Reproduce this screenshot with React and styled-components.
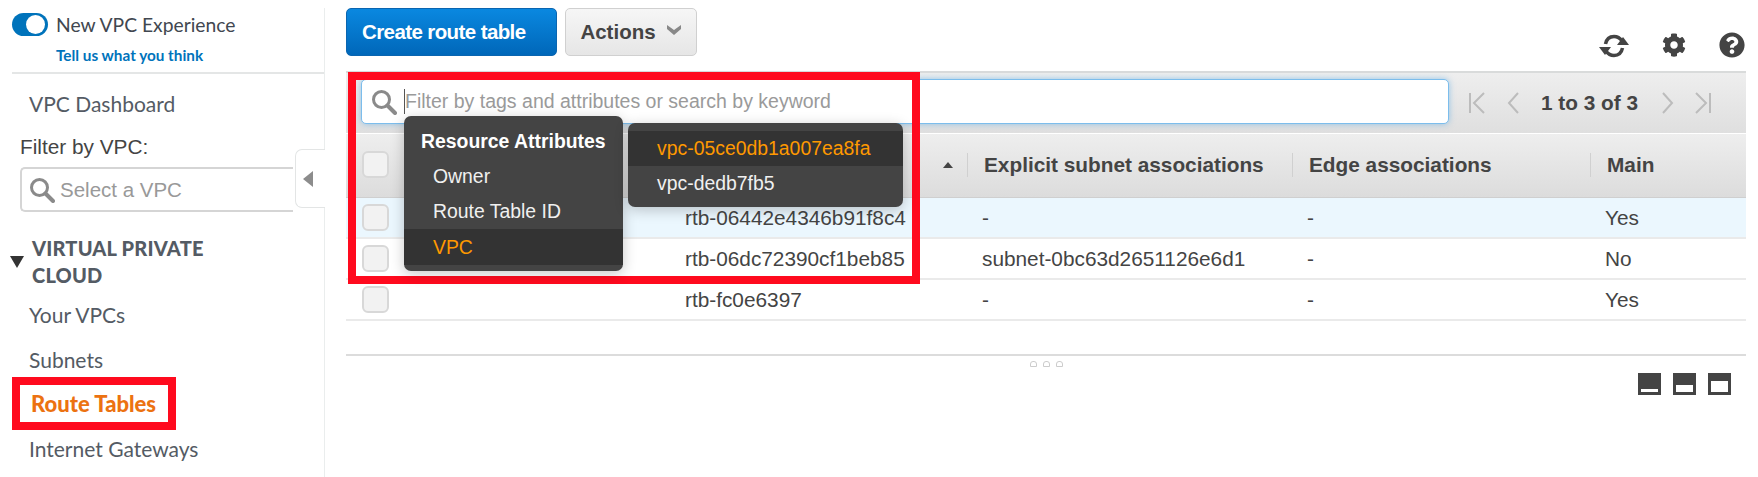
import styled, { createGlobalStyle } from "styled-components";
import { FaCog, FaQuestionCircle } from "react-icons/fa";

const GlobalStyle = createGlobalStyle`
  html, body {
    margin: 0;
    padding: 0;
    background: #fff;
  }
  * {
    box-sizing: border-box;
  }
`;

const UI_FONT = `"Lato", "Open Sans", sans-serif`;
const TABLE_FONT = `"Liberation Sans", Arial, sans-serif`;

const Page = styled.div`
  position: relative;
  display: flex;
  width: 1758px;
  height: 477px;
  overflow: hidden;
  font-family: ${TABLE_FONT};
  color: #444;
`;

/* sidebar */
const Sidebar = styled.aside`
  position: relative;
  flex: 0 0 325px;
  margin-top: 8px;
  padding-left: 12px;
  border-right: 1px solid #eaeded;
`;

const Experience = styled.div`
  display: grid;
  grid-template-columns: 36px 1fr;
  column-gap: 8px;
  height: 66px;
  padding-top: 5px;
  border-bottom: 2px solid #e4e6e6;
`;

const Toggle = styled.span`
  position: relative;
  width: 36px;
  height: 23px;
  border-radius: 12px;
  background: #0073bb;
  &::after {
    content: "";
    position: absolute;
    right: 3px;
    top: 2px;
    width: 19px;
    height: 19px;
    border-radius: 50%;
    background: #fff;
  }
`;

const ExperienceTitle = styled.div`
  font-family: ${UI_FONT};
  font-size: 19.3px;
  line-height: 24px;
  color: #414750;
`;

const Feedback = styled.a`
  grid-column: 2;
  margin-top: 1px;
  font-family: ${UI_FONT};
  font-size: 15.3px;
  font-weight: 700;
  line-height: 24px;
  color: #0073bb;
`;

const NavLink = styled.div`
  padding-left: ${(p) => p.$indent || 17}px;
  height: ${(p) => p.$height || 44.5}px;
  line-height: ${(p) => p.$height || 44.5}px;
  font-family: ${UI_FONT};
  font-size: ${(p) => (p.$active ? 22 : 21)}px;
  font-weight: ${(p) => (p.$active ? 900 : 400)};
  color: ${(p) => (p.$active ? "#ec7211" : "#545b64")};
`;

const FilterLabel = styled.div`
  margin: 1px 0 0 8px;
  font-size: 20.8px;
  line-height: 24px;
  color: #444;
`;

const VpcSelect = styled.div`
  display: flex;
  align-items: center;
  gap: 5px;
  width: 273px;
  height: 45px;
  margin: 8px 0 0 8px;
  padding-left: 7px;
  border: 2px solid #d5d5d5;
  border-right: 0;
  border-radius: 5px 0 0 5px;
  font-size: 20.5px;
  color: #999;
`;

const CollapseTab = styled.div`
  position: absolute;
  left: 295px;
  top: 141px;
  display: flex;
  align-items: center;
  justify-content: center;
  width: 30px;
  height: 59px;
  padding-right: 5px;
  background: #fff;
  border: 1px solid #e3e5e5;
  border-right: 0;
  border-radius: 7px 0 0 7px;
  &::before {
    content: "";
    border-style: solid;
    border-width: 8px 10px 8px 0;
    border-color: transparent #8c8c8c transparent transparent;
  }
`;

const Section = styled.div`
  display: flex;
  gap: 8px;
  margin-top: 23px;
  font-family: ${UI_FONT};
  font-size: 20px;
  font-weight: 900;
  line-height: 27px;
  letter-spacing: 0.2px;
  color: #545b64;
  &::before {
    content: "";
    flex: none;
    width: 0;
    height: 0;
    margin: 21px 0 0 -2px;
    border-style: solid;
    border-width: 12px 7px 0 7px;
    border-color: #333 transparent transparent transparent;
  }
`;

const SectionLinks = styled.div`
  margin-top: 4px;
`;

/* main column */
const Main = styled.main`
  flex: 1;
  padding: 8px 12px 0 21px;
`;

const Actions = styled.div`
  display: flex;
  gap: 8px;
  height: 63px;
`;

const PrimaryButton = styled.button`
  width: 211px;
  height: 48px;
  padding: 0 0 0 15px;
  border: 1px solid #0a65b0;
  border-radius: 5px;
  background: linear-gradient(#0a88e0, #0067b9);
  font-family: ${TABLE_FONT};
  font-size: 20.5px;
  font-weight: 700;
  letter-spacing: -0.6px;
  text-align: left;
  color: #fff;
`;

const SecondaryButton = styled.button`
  display: flex;
  align-items: center;
  justify-content: center;
  gap: 10px;
  width: 132px;
  height: 48px;
  padding: 0;
  border: 1px solid #d0d0d0;
  border-radius: 5px;
  background: linear-gradient(#f6f6f6, #e6e6e6);
  font-family: ${TABLE_FONT};
  font-size: 20.5px;
  font-weight: 700;
  color: #444;
  svg {
    margin-top: -4px;
  }
`;

const ToolIcons = styled.div`
  display: flex;
  align-items: center;
  gap: 33px;
  margin: 14px 1px 0 auto;
  height: 48px;
  color: #444;
`;

const FilterBar = styled.div`
  display: flex;
  align-items: center;
  height: 62px;
  padding-left: 15px;
  border-top: 2px solid #d9dbdb;
  background: linear-gradient(#eeeeee, #dfdfdf);
`;

const SearchBox = styled.div`
  display: flex;
  align-items: center;
  gap: 8px;
  width: 1088px;
  height: 45px;
  margin-bottom: 3px;
  padding-left: 9px;
  background: #fff;
  border: 1px solid #7cbdec;
  border-radius: 5px;
  box-shadow: 0 0 6px rgba(90, 170, 230, 0.6);
  font-size: 19.5px;
  color: #9a9a9a;
`;

const Caret = styled.span`
  width: 1px;
  height: 25px;
  margin: 0 -8px 0 -1px;
  background: #555;
`;

const Pager = styled.div`
  display: flex;
  align-items: center;
  margin-left: 20px;
  font-size: 20.8px;
  font-weight: 700;
  color: #444;
`;

const PagerLabel = styled.span`
  margin: 0 24px 0 22px;
  white-space: nowrap;
`;

const PagerIcon = styled.svg`
  width: ${(p) => p.$w}px;
  height: 24px;
  margin-right: ${(p) => p.$gap || 0}px;
  fill: none;
  stroke: #bcbcbc;
  stroke-width: 2;
`;

const COLUMNS = "339px 282px 325px 298px 1fr";

const HeaderRow = styled.div`
  display: grid;
  grid-template-columns: ${COLUMNS};
  align-items: center;
  height: 64px;
  margin-top: 1px;
  padding-bottom: 2px;
  background: linear-gradient(#eeeeee, #dcdcdc);
  border-bottom: 1px solid #cfcfcf;
  font-size: 20.8px;
  font-weight: 700;
  color: #444;
`;

const HeaderCell = styled.div`
  display: flex;
  align-items: center;
  height: 24px;
  padding-left: 16px;
  border-left: 1px solid #d0d0d0;
`;

const SortCell = styled.div`
  display: flex;
  justify-content: flex-end;
  padding-right: 14px;
  &::after {
    content: "";
    border-style: solid;
    border-width: 0 5px 6px 5px;
    border-color: transparent transparent #444 transparent;
  }
`;

const Row = styled.div`
  display: grid;
  grid-template-columns: ${COLUMNS};
  align-items: center;
  height: 41px;
  background: ${(p) => (p.$selected ? "#ebf7fe" : "#fff")};
  border-bottom: 2px solid #eaeaea;
  font-size: 20.8px;
  color: #444;
`;

const Cell = styled.div`
  padding-left: ${(p) => p.$pad ?? 15}px;
  white-space: nowrap;
`;

const CheckCell = styled.div`
  padding-left: 16px;
  display: flex;
`;

const Checkbox = styled.span`
  width: 27px;
  height: 27px;
  border: 2px solid #d8d8d8;
  border-radius: 6px;
  background: #f2f2f2;
`;

const Splitter = styled.div`
  display: flex;
  justify-content: center;
  gap: 6px;
  height: 18px;
  margin-top: 33px;
  padding-top: 5px;
  border-top: 2px solid #dcdcdc;
`;

const Grip = styled.span`
  width: 7px;
  height: 6px;
  border: 1px solid #ccc;
  border-radius: 3px 3px 0 0;
`;

const PaneSizes = styled.div`
  display: flex;
  justify-content: flex-end;
  gap: 12px;
  margin-top: 1px;
  padding-right: 15px;
`;

const PaneSize = styled.span`
  display: flex;
  align-items: flex-end;
  width: 23px;
  height: 22px;
  padding: 0 3px 3px;
  background: #444;
  &::after {
    content: "";
    width: 100%;
    height: ${(p) => p.$fill}px;
    background: #fff;
  }
`;

/* overlays */
const Highlight = styled.div`
  position: absolute;
  left: ${(p) => p.$x}px;
  top: ${(p) => p.$y}px;
  width: ${(p) => p.$w}px;
  height: ${(p) => p.$h}px;
  border: 8px solid #ff0a1e;
  pointer-events: none;
`;

const Menu = styled.div`
  position: absolute;
  left: ${(p) => p.$x}px;
  top: ${(p) => p.$y}px;
  width: ${(p) => p.$w}px;
  height: ${(p) => p.$h}px;
  padding-top: ${(p) => p.$pad}px;
  background: #444;
  border-radius: 7px;
  box-shadow: 0 3px 14px rgba(0, 0, 0, 0.22);
  font-size: 19.4px;
  color: #f0f0f0;
`;

const MenuHeading = styled.div`
  height: 35px;
  padding-left: 17px;
  line-height: 35px;
  font-weight: 700;
  color: #fff;
`;

const MenuItem = styled.div`
  height: ${(p) => p.$height || 35}px;
  padding-left: ${(p) => p.$pad}px;
  line-height: ${(p) => p.$height || 35}px;
  background: ${(p) => (p.$active ? "#333" : "transparent")};
  color: ${(p) => (p.$active ? "#f90" : "#f0f0f0")};
`;

const SearchGlyph = ({ size = 26 }) => (
  <svg width={size} height={size} viewBox="0 0 26 26" fill="none" style={{ flex: "none" }}>
    <circle cx="10.5" cy="10.5" r="8" stroke="#8a8a8a" strokeWidth="3" />
    <path d="M16.5 16.5L24 24" stroke="#8a8a8a" strokeWidth="4" strokeLinecap="round" />
  </svg>
);

const RefreshGlyph = () => (
  <svg width="30" height="28" viewBox="0 0 30 28" fill="none">
    <path d="M6.5 12C7.5 7 11 4.5 15 4.5c3.5 0 6 1.5 8 4.5" stroke="#444" strokeWidth="3.5" />
    <path d="M23.5 16c-1 5-4.5 7.5-8.5 7.5-3.5 0-6-1.5-8-4.5" stroke="#444" strokeWidth="3.5" />
    <path d="M18 13h12l-6-8zM0 15h12l-6 8z" fill="#444" />
  </svg>
);

const rows = [
  { id: "rtb-06442e4346b91f8c4", subnet: "-", main: "Yes", selected: true },
  { id: "rtb-06dc72390cf1beb85", subnet: "subnet-0bc63d2651126e6d1", main: "No" },
  { id: "rtb-fc0e6397", subnet: "-", main: "Yes" },
];

const App = () => (
  <Page>
    <GlobalStyle />
    <Sidebar>
      <Experience>
        <Toggle />
        <ExperienceTitle>New VPC Experience</ExperienceTitle>
        <Feedback>Tell us what you think</Feedback>
      </Experience>
      <NavLink $height={60}>VPC Dashboard</NavLink>
      <FilterLabel>Filter by VPC:</FilterLabel>
      <VpcSelect>
        <SearchGlyph />
        Select a VPC
      </VpcSelect>
      <CollapseTab />
      <Section>VIRTUAL PRIVATE<br />CLOUD</Section>
      <SectionLinks>
        <NavLink>Your VPCs</NavLink>
        <NavLink>Subnets</NavLink>
        <NavLink $active $indent={19}>Route Tables</NavLink>
        <NavLink>Internet Gateways</NavLink>
      </SectionLinks>
    </Sidebar>

    <Main>
      <Actions>
        <PrimaryButton>Create route table</PrimaryButton>
        <SecondaryButton>
          Actions
          <svg width="16" height="12" viewBox="0 0 16 12">
            <path d="M1 1l7 5 7-5v4l-7 6-7-6z" fill="#888" />
          </svg>
        </SecondaryButton>
        <ToolIcons>
          <RefreshGlyph />
          <FaCog size={24} style={{ marginTop: -3 }} />
          <FaQuestionCircle size={26} style={{ marginTop: -2 }} />
        </ToolIcons>
      </Actions>

      <FilterBar>
        <SearchBox>
          <SearchGlyph />
          <Caret />
          Filter by tags and attributes or search by keyword
        </SearchBox>
        <Pager>
          <PagerIcon $w={17} $gap={21} viewBox="0 0 17 24">
            <path d="M1 2v20M15 2L5 12l10 10" />
          </PagerIcon>
          <PagerIcon $w={12} viewBox="0 0 12 24">
            <path d="M11 2L2 12l9 10" />
          </PagerIcon>
          <PagerLabel>1 to 3 of 3</PagerLabel>
          <PagerIcon $w={12} $gap={20} viewBox="0 0 12 24">
            <path d="M1 2l9 10-9 10" />
          </PagerIcon>
          <PagerIcon $w={17} viewBox="0 0 17 24">
            <path d="M16 2v20M2 2l10 10L2 22" />
          </PagerIcon>
        </Pager>
      </FilterBar>

      <HeaderRow>
        <CheckCell><Checkbox /></CheckCell>
        <SortCell />
        <HeaderCell>Explicit subnet associations</HeaderCell>
        <HeaderCell>Edge associations</HeaderCell>
        <HeaderCell>Main</HeaderCell>
      </HeaderRow>
      {rows.map((row) => (
        <Row key={row.id} $selected={row.selected}>
          <CheckCell><Checkbox /></CheckCell>
          <Cell $pad={0}>{row.id}</Cell>
          <Cell>{row.subnet}</Cell>
          <Cell>-</Cell>
          <Cell>{row.main}</Cell>
        </Row>
      ))}

      <Splitter>
        <Grip />
        <Grip />
        <Grip />
      </Splitter>
      <PaneSizes>
        <PaneSize $fill={3} />
        <PaneSize $fill={7} />
        <PaneSize $fill={11} />
      </PaneSizes>
    </Main>

    <Highlight $x={348} $y={72} $w={572} $h={212} />
    <Highlight $x={12} $y={377} $w={164} $h={53} />

    <Menu $x={404} $y={116} $w={219} $h={155} $pad={8}>
      <MenuHeading>Resource Attributes</MenuHeading>
      <MenuItem $pad={29}>Owner</MenuItem>
      <MenuItem $pad={29}>Route Table ID</MenuItem>
      <MenuItem $pad={29} $active $height={36}>VPC</MenuItem>
    </Menu>
    <Menu $x={628} $y={123} $w={275} $h={84} $pad={8}>
      <MenuItem $pad={29} $active>vpc-05ce0db1a007ea8fa</MenuItem>
      <MenuItem $pad={29}>vpc-dedb7fb5</MenuItem>
    </Menu>
  </Page>
);

export default App;
